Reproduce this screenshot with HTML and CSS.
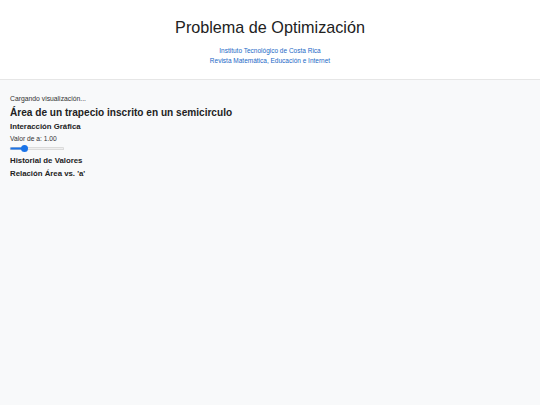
FILE: index.html
```html
<!DOCTYPE html>
<html lang="es">
<head>
<meta charset="utf-8">
<title>Problema de Optimización</title>
<link rel="stylesheet" href="styles.css">
</head>
<body>
<header class="header">
  <h1 class="title">Problema de Optimización</h1>
  <p class="sub">Instituto Tecnológico de Costa Rica</p>
  <p class="sub">Revista Matemática, Educación e Internet</p>
</header>
<main class="content">
  <p class="loading">Cargando visualización...</p>
  <h2 class="h2">Área de un trapecio inscrito en un semicirculo</h2>
  <h3 class="h3 h3-first">Interacción Gráfica</h3>
  <p class="label">Valor de a: 1.00</p>
  <input class="slider" type="range" min="0.1" max="4" step="0.01" value="1" aria-label="Valor de a">
  <h3 class="h3 h3-after">Historial de Valores</h3>
  <h3 class="h3">Relación Área vs. 'a'</h3>
</main>
</body>
</html>
```
FILE: styles.css
```css
html, body {
  margin: 0;
  padding: 0;
}
body {
  font-family: "Liberation Sans", Arial, sans-serif;
  background: #f8f9fa;
  color: #222;
  min-height: 405px;
}
.header {
  background: #fff;
  border-bottom: 1px solid #e6e6e6;
  text-align: center;
  padding: 17px 0 14px;
  box-sizing: border-box;
  height: 80px;
}
.title {
  margin: 0 0 9px;
  font-size: 16.2px;
  font-weight: normal;
  line-height: 20px;
  color: #222;
}
.sub {
  margin: 0;
  font-size: 6.5px;
  line-height: 10px;
  color: #1a68c6;
}
.content {
  padding: 14px 10px;
}
.loading {
  margin: 0;
  font-size: 6.8px;
  line-height: 10px;
  color: #333;
}
.h2 {
  margin: 2px 0 0;
  font-size: 10.1px;
  line-height: 14px;
  font-weight: bold;
}
.h3 {
  margin: 1px 0 0;
  font-size: 7.8px;
  line-height: 12px;
  font-weight: bold;
}
.h3-first {
  margin-top: 1px;
}
.label {
  margin: 1px 0 0;
  font-size: 6.7px;
  line-height: 10px;
  color: #333;
}
.slider {
  -webkit-appearance: none;
  appearance: none;
  display: block;
  width: 54px;
  height: 8px;
  margin: 0 0 3px;
  padding: 0;
  background: transparent;
}
.h3.h3-after {
  margin-top: 0;
}
.slider::-webkit-slider-runnable-track {
  height: 3px;
  border-radius: 2px;
  background: linear-gradient(to right, #1a73e8 0 27%, #efefef 27% 100%);
  box-shadow: inset 0 0 0 0.5px #c8c8c8;
}
.slider::-webkit-slider-thumb {
  -webkit-appearance: none;
  width: 7px;
  height: 7px;
  border-radius: 50%;
  background: #1a73e8;
  margin-top: -2px;
  border: none;
}
```
